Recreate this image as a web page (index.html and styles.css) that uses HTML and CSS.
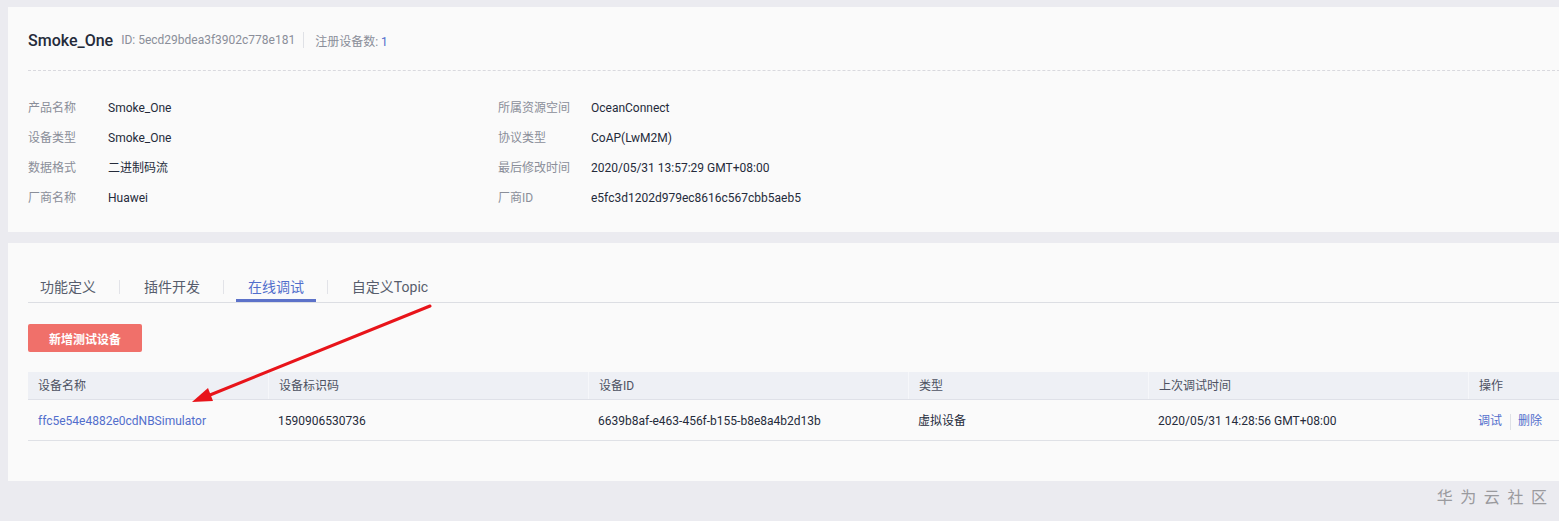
FILE: index.html
```html
<!DOCTYPE html>
<html lang="zh-CN">
<head>
<meta charset="utf-8">
<title>Smoke_One - 产品详情</title>
<link rel="stylesheet" href="styles.css">
</head>
<body>
<div class="page">
  <section class="card product">
    <div class="product-head">
      <span class="product-name">Smoke_One</span>
      <span class="product-id">ID: 5ecd29bdea3f3902c778e181</span>
      <span class="head-sep"></span>
      <span class="product-count">注册设备数: <em>1</em></span>
    </div>
    <div class="info">
      <div class="info-col">
        <div class="info-row"><span class="label">产品名称</span><span class="value">Smoke_One</span></div>
        <div class="info-row"><span class="label">设备类型</span><span class="value">Smoke_One</span></div>
        <div class="info-row"><span class="label">数据格式</span><span class="value">二进制码流</span></div>
        <div class="info-row"><span class="label">厂商名称</span><span class="value">Huawei</span></div>
      </div>
      <div class="info-col wide">
        <div class="info-row"><span class="label">所属资源空间</span><span class="value">OceanConnect</span></div>
        <div class="info-row"><span class="label">协议类型</span><span class="value">CoAP(LwM2M)</span></div>
        <div class="info-row"><span class="label">最后修改时间</span><span class="value">2020/05/31 13:57:29 GMT+08:00</span></div>
        <div class="info-row"><span class="label">厂商ID</span><span class="value">e5fc3d1202d979ec8616c567cbb5aeb5</span></div>
      </div>
    </div>
  </section>

  <section class="card devices">
    <nav class="tabs">
      <span class="tab">功能定义</span>
      <span class="tab">插件开发</span>
      <span class="tab active">在线调试</span>
      <span class="tab topic">自定义Topic</span>
    </nav>
    <button class="btn-add" type="button">新增测试设备</button>
    <div class="table">
      <div class="tr thead">
        <div class="th">设备名称</div>
        <div class="th">设备标识码</div>
        <div class="th">设备ID</div>
        <div class="th">类型</div>
        <div class="th">上次调试时间</div>
        <div class="th">操作</div>
      </div>
      <div class="tr tbody">
        <div class="td"><a class="link">ffc5e54e4882e0cdNBSimulator</a></div>
        <div class="td">1590906530736</div>
        <div class="td">6639b8af-e463-456f-b155-b8e8a4b2d13b</div>
        <div class="td">虚拟设备</div>
        <div class="td">2020/05/31 14:28:56 GMT+08:00</div>
        <div class="td ops"><a class="link">调试</a><span class="op-sep"></span><a class="link">删除</a></div>
      </div>
    </div>
  </section>

  <footer class="brand">华 为 云 社 区</footer>

  <svg class="pointer" width="1559" height="521" viewBox="0 0 1559 521" aria-hidden="true">
    <line x1="430" y1="306" x2="205" y2="397" stroke="#e8141a" stroke-width="3" stroke-linecap="round"/>
    <polygon points="192,402 208,388 213,401" fill="#e8141a"/>
  </svg>
</div>
</body>
</html>
```

FILE: styles.css
```css
html, body {
  margin: 0;
  padding: 0;
}

body {
  background: #ebebf0;
  font-family: Roboto, "Noto Sans CJK SC", sans-serif;
  font-size: 12px;
  color: #252b3a;
  overflow: hidden;
  width: 1559px;
  height: 521px;
}

.page {
  position: relative;
  width: 1600px;
  padding: 7px 0 0 8px;
}

.card {
  background: #fafafa;
  width: 1592px;
  box-sizing: border-box;
  padding-left: 20px;
}

/* product summary */
.product {
  height: 225px;
  padding-top: 24px;
}

.product-head {
  display: flex;
  align-items: center;
  height: 18px;
  padding-bottom: 21px;
  border-bottom: 1px dashed #d9d9de;
}

.product-name {
  font-size: 16px;
  font-weight: 500;
  color: #252b3a;
  margin-right: 8px;
}

.product-id {
  color: #8a8e99;
}

.head-sep {
  width: 1px;
  height: 16px;
  background: #dfe1e6;
  margin: 0 11px 0 8px;
}

.product-count {
  color: #8a8e99;
}

.product-count em {
  font-style: normal;
  color: #526ecc;
}

.info {
  display: flex;
  padding-top: 22px;
}

.info-col {
  width: 470px;
}

.info-row {
  height: 30px;
  line-height: 30px;
  white-space: nowrap;
}

.label {
  display: inline-block;
  width: 80px;
  color: #8a8e99;
}

.info-col.wide .label {
  width: 93px;
}

.value {
  color: #252b3a;
}

/* device list */
.devices {
  margin-top: 11px;
  height: 238px;
  padding-top: 29px;
}

.tabs {
  display: flex;
  gap: 24px;
  border-bottom: 1px solid #dcdee3;
  height: 30px;
  align-items: stretch;
}

.tab {
  position: relative;
  width: 80px;
  box-sizing: border-box;
  text-align: center;
  font-size: 14px;
  line-height: 30px;
  color: #575d6c;
}

.tab.topic {
  width: 100px;
}

.tab + .tab::before {
  content: "";
  position: absolute;
  left: -13px;
  top: 8px;
  width: 1px;
  height: 14px;
  background: #e2e3e8;
}

.tab.active {
  color: #526ecc;
}

.tab.active::after {
  content: "";
  position: absolute;
  left: 0;
  right: 0;
  bottom: 0;
  height: 3px;
  background: #5c72c9;
}

.btn-add {
  display: block;
  margin-top: 21px;
  width: 114px;
  height: 28px;
  border: 0;
  border-radius: 2px;
  background: #f0706a;
  color: #fff;
  font-family: "Noto Sans CJK SC", sans-serif;
  font-size: 12px;
  font-weight: 700;
  padding: 0;
}

.table {
  margin-top: 20px;
}

.tr {
  display: grid;
  grid-template-columns: 240px 320px 320px 240px 320px 1fr;
}

.thead {
  background: #eef0f5;
  height: 27px;
  border-bottom: 1px solid #dfe1e8;
}

.th {
  padding: 1px 0 0 10px;
  line-height: 26px;
  color: #4d5262;
  border-left: 1px solid #f6f7fa;
  white-space: nowrap;
}

.th:first-child {
  border-left: 0;
}

.tbody {
  height: 40px;
  border-bottom: 1px solid #dfe1e6;
}

.td {
  padding: 2px 0 0 10px;
  line-height: 38px;
  color: #252b3a;
  white-space: nowrap;
}

.link {
  color: #526ecc;
  text-decoration: none;
}

.op-sep {
  display: inline-block;
  vertical-align: middle;
  width: 1px;
  height: 16px;
  background: #dfe1e6;
  margin: 0 7px 0 8px;
}

/* footer watermark */
.brand {
  width: 1551px;
  text-align: right;
  box-sizing: border-box;
  padding-right: 10px;
  margin-top: 4px;
  font-family: "Noto Sans CJK SC", sans-serif;
  font-size: 16px;
  line-height: 22px;
  color: #9a9a9e;
  letter-spacing: 2px;
}

/* annotation arrow drawn over the list */
.pointer {
  position: absolute;
  left: 0;
  top: 0;
  pointer-events: none;
}
```
